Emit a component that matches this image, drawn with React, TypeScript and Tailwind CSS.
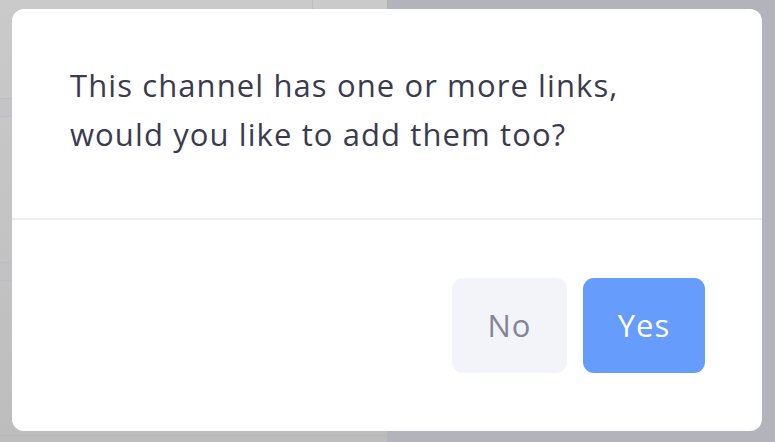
export default function App() {
    return (
        <div className="relative w-[775px] h-[442px] overflow-hidden flex" style={{ fontFamily: '"Open Sans", "Noto Sans", sans-serif' }}>
            {/* Dimmed app behind the dialog */}
            <div className="w-[387px] h-full flex flex-col bg-gradient-to-b from-[#cacaca] to-[#bdbdbd]">
                <div className="h-[98px] flex">
                    <div className="w-[313px] border-r border-[#bcbcc2]" />
                </div>
                <div className="h-[19px] border-y border-[#bdbdc3] bg-[#c4c4c6]" />
                <div className="h-[145px]" />
                <div className="h-[19px] border-y border-[#bdbdc3] bg-[#c2c2c4]" />
                <div className="flex-1 border-b border-[#b6b6bb]" />
                <div className="h-[6px]" />
            </div>
            <div className="flex-1 h-full bg-[#b2b3bb]" />

            {/* Dialog */}
            <div className="absolute left-[12px] top-[9px] w-[750px] h-[422px] bg-white rounded-[12px] flex flex-col">
                <div className="h-[211px] px-[58px] pt-[52px] border-b-2 border-[#ececf2]">
                    <p className="text-[31px] leading-[49px] text-[#3b3b4f] tracking-[1.1px]">
                        This channel has one or more links,
                        <br />
                        would you like to add them too?
                    </p>
                </div>
                <div className="flex-1 flex items-start justify-end gap-4 pt-[58px] pr-[57px]">
                    <button className="w-[115px] h-[95px] rounded-[11px] bg-[#f3f4f9] text-[#84849a] text-[31px] tracking-[1px]">
                        No
                    </button>
                    <button className="w-[122px] h-[95px] rounded-[11px] bg-[#669cfc] text-white text-[31px] tracking-[1px]">
                        Yes
                    </button>
                </div>
            </div>
        </div>
    );
}
